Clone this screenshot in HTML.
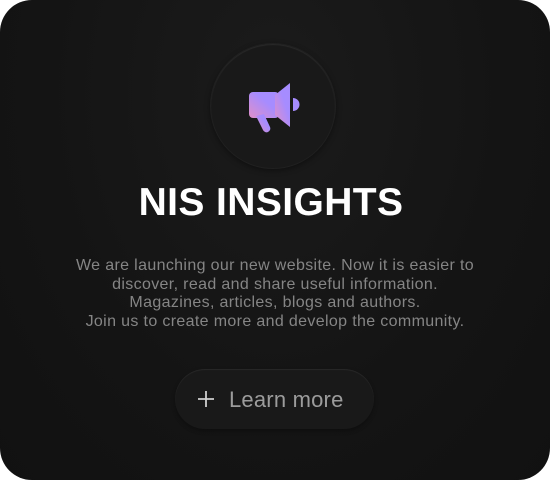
<!DOCTYPE html>
<html><head><style>
html,body{margin:0;padding:0;background:#fff;}
.card{position:absolute;left:0;top:0;width:550px;height:480px;border-radius:32px;background:radial-gradient(ellipse at 50% 20%,#1b1b1b 0%,#141414 60%,#111 100%);overflow:hidden;font-family:"Liberation Sans",sans-serif;}
.circle{position:absolute;left:210px;top:43px;width:126px;height:126px;border-radius:50%;background:#191919;box-shadow:inset 0 1px 1px rgba(255,255,255,0.08),0 2px 6px rgba(0,0,0,0.4);border:1px solid #202020;box-sizing:border-box;}
h1{position:absolute;left:-4px;width:550px;top:181px;margin:0;text-align:center;color:#fff;font-size:39px;font-weight:bold;letter-spacing:0.4px;}
p{position:absolute;left:0;width:550px;top:257px;margin:0;text-align:center;color:#858585;font-size:16px;letter-spacing:0.35px;line-height:18.7px;}
.btn{position:absolute;left:175px;top:369px;width:199px;height:60px;border-radius:30px;background:#191919;box-shadow:inset 0 1px 1px rgba(255,255,255,0.07),0 2px 4px rgba(0,0,0,0.3);}
.btn span{position:absolute;left:54px;top:18px;color:#9c9c9c;font-size:22px;letter-spacing:0.2px;}
</style></head><body>
<div class="card">
<div class="circle"></div>
<svg style="position:absolute;left:0;top:0" width="550" height="480">
<defs><linearGradient id="g" x1="0" y1="1" x2="1" y2="0"><stop offset="0" stop-color="#e08fc8"/><stop offset="0.6" stop-color="#a68cff"/></linearGradient></defs>
<rect x="249" y="92" width="30" height="26" rx="4" fill="url(#g)"/>
<path d="M275 95 L290 83 L290 127 L275 115 Z" fill="url(#g)"/>
<path d="M293 98 A6.5 6.5 0 0 1 293 111 Z" fill="#a68cff"/>
<path d="M264 114 L270 127 A3.5 3.5 0 0 1 263 130 L256 116 Z" fill="url(#g)"/>
</svg>
<h1>NIS INSIGHTS</h1>
<p>We are launching our new website. Now it is easier to<br>discover, read and share useful information.<br>Magazines, articles, blogs and authors.<br>Join us to create more and develop the community.</p>
<div class="btn">
<svg style="position:absolute;left:22px;top:21px" width="18" height="18"><path d="M9 1V17M1 9H17" stroke="#cfcfcf" stroke-width="1.8"/></svg>
<span>Learn more</span></div>
</div>
</body></html>
